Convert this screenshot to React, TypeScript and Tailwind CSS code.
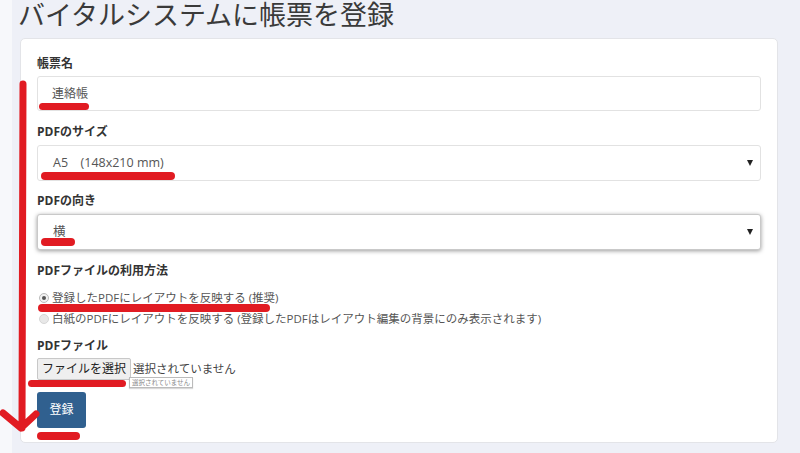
import React from "react";

const font = "font-['Open_Sans','Noto_Sans_CJK_JP',sans-serif]";

function Label({ children }: { children: React.ReactNode }) {
  return <div className="h-[17px] text-[12px] leading-[17px] font-bold text-[#333]">{children}</div>;
}

function SelectBox({ value, focused }: { value: string; focused?: boolean }) {
  return (
    <div
      className={`mt-[5px] h-[36px] flex items-center justify-between pl-[15px] pr-[7px] rounded-[3px] bg-white border ${
        focused ? "border-[#c9c9c9] shadow-[0_1px_4px_rgba(0,0,0,0.4)]" : "border-[#e2e2e2]"
      }`}
    >
      <span className="text-[12.5px] text-[#555] whitespace-pre">{value}</span>
      <span className="w-0 h-0 border-l-[3.5px] border-r-[3.5px] border-t-[6px] border-l-transparent border-r-transparent border-t-[#222]" />
    </div>
  );
}

function Radio({ checked, children }: { checked?: boolean; children: React.ReactNode }) {
  return (
    <div className="h-[21px] flex items-center gap-[3px] pl-[2px]">
      <span
        className={`w-[10px] h-[10px] rounded-full flex items-center justify-center border ${
          checked ? "border-[#bbb] bg-[#f2f2f2]" : "border-[#d6d6d6] bg-[#e8e8e8]"
        }`}
      >
        {checked && <span className="w-[4px] h-[4px] rounded-full bg-[#555]" />}
      </span>
      <span className="text-[11.5px] text-[#555] whitespace-nowrap">{children}</span>
    </div>
  );
}

export default function App() {
  return (
    <div className={`relative w-[800px] h-[453px] overflow-hidden bg-[#eef0f7] flex ${font}`}>
      <div className="w-[12px] shrink-0 bg-[#f7f8fb]" />
      <div className="flex-1 flex flex-col">
        <div className="h-[38px] pl-[6px] text-[27px] leading-[28px] text-[#3a3a3a] font-['Noto_Sans_CJK_JP',sans-serif]">
          バイタルシステムに帳票を登録
        </div>

        {/* form card */}
        <div className="ml-[8px] w-[758px] h-[405px] bg-white border border-[#e3e4e8] rounded-[5px] pl-[16px] pr-[16px] pt-[16px]">
          <Label>帳票名</Label>
          <div className="mt-[4px] h-[35px] flex items-center pl-[14px] rounded-[3px] border border-[#e2e2e2]">
            <span className="text-[12px] text-[#555]">連絡帳</span>
          </div>

          <div className="mt-[12px]">
            <Label>PDFのサイズ</Label>
            <SelectBox value={"A5　(148x210 mm)"} />
          </div>

          <div className="mt-[11px]">
            <Label>PDFの向き</Label>
            <SelectBox value="横" focused />
          </div>

          <div className="mt-[12px]">
            <Label>PDFファイルの利用方法</Label>
            <div className="mt-[8px] flex flex-col">
              <Radio checked>登録したPDFにレイアウトを反映する (推奨)</Radio>
              <Radio>白紙のPDFにレイアウトを反映する (登録したPDFはレイアウト編集の背景にのみ表示されます)</Radio>
            </div>
          </div>

          <div className="mt-[8px]">
            <Label>PDFファイル</Label>
            <div className="relative mt-[4px] h-[22px] flex items-center gap-[2px]">
              <button className="h-[22px] px-[4px] bg-[#efefef] border border-[#c8c8c8] rounded-[2px] text-[12px] text-[#222]">
                ファイルを選択
              </button>
              <span className="text-[11.5px] text-[#444]">選択されていません</span>
              <div className="absolute left-[92px] top-[19px] h-[11px] px-[2px] border border-[#bbb] bg-white text-[6.5px] leading-[9px] text-[#888] shadow-[0_1px_1px_rgba(0,0,0,0.15)]">
                選択されていません
              </div>
            </div>
          </div>

          <button className="mt-[12px] w-[49px] h-[36px] rounded-[3px] bg-[#30608f] text-white text-[12px]">
            登録
          </button>
        </div>
      </div>

      {/* red hand-drawn annotations */}
      <div className="absolute left-[39px] top-[103px] w-[50px] h-[7px] rounded-full bg-[#e11b22]" />
      <div className="absolute left-[41px] top-[172px] w-[134px] h-[8px] rounded-full bg-[#e11b22]" />
      <div className="absolute left-[41px] top-[238px] w-[34px] h-[8px] rounded-full bg-[#e11b22]" />
      <div className="absolute left-[38px] top-[304px] w-[232px] h-[8px] rounded-full bg-[#e11b22]" />
      <div className="absolute left-[28px] top-[380px] w-[98px] h-[7px] rounded-full bg-[#e11b22]" />
      <div className="absolute left-[37px] top-[432px] w-[43px] h-[8px] rounded-full bg-[#e11b22]" />
      <svg className="absolute left-0 top-0" width="60" height="453" viewBox="0 0 60 453">
        <path
          d="M23 84 L22 428 M3 413 L21 428 L36 414"
          fill="none"
          stroke="#e11b22"
          strokeWidth="7"
          strokeLinecap="round"
          strokeLinejoin="round"
        />
      </svg>
    </div>
  );
}
